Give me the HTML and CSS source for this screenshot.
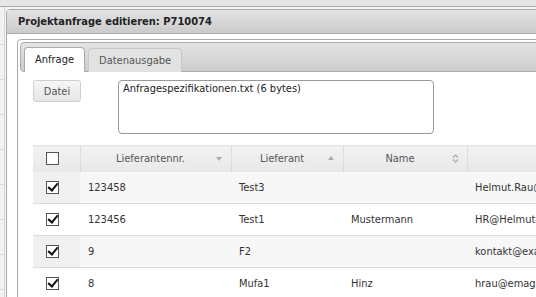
FILE: index.html
```html
<!DOCTYPE html>
<html lang="de">
<head>
    <meta charset="UTF-8">
    <title>Projektanfrage editieren</title>
    <link rel="stylesheet" href="styles.css">
</head>
<body>

<div class="topbar"></div>
<div class="backlist"></div>

<div class="dialog">
    <div class="dialog-title">Projektanfrage editieren: P710074</div>
    <div class="dialog-body">
        <div class="tabs">
            <ul class="tab-nav">
                <li class="tab active">Anfrage</li>
                <li class="tab">Datenausgabe</li>
            </ul>
            <div class="tab-panel">
                <div class="upload-row">
                    <button class="btn">Datei</button>
                    <div class="filebox">Anfragespezifikationen.txt (6 bytes)</div>
                </div>

                <table class="grid">
                    <thead>
                        <tr>
                            <th class="col-check"><span class="cb"></span></th>
                            <th class="col-nr">Lieferantennr.<span class="sort down"></span></th>
                            <th class="col-lief">Lieferant<span class="sort up"></span></th>
                            <th class="col-name">Name<span class="sort both">
                                <svg width="7" height="9" viewBox="0 0 7 9"><path d="M1 3.5 L3.5 1 L6 3.5 M1 5.5 L3.5 8 L6 5.5" fill="none" stroke="#aaa" stroke-width="1.2"/></svg>
                            </span></th>
                            <th class="col-mail"></th>
                        </tr>
                    </thead>
                    <tbody>
                        <tr class="odd">
                            <td class="col-check"><span class="cb checked"></span></td>
                            <td>123458</td>
                            <td>Test3</td>
                            <td></td>
                            <td>Helmut.Rau@example.de</td>
                        </tr>
                        <tr>
                            <td class="col-check"><span class="cb checked"></span></td>
                            <td>123456</td>
                            <td>Test1</td>
                            <td>Mustermann</td>
                            <td>HR@Helmut-Rau.de</td>
                        </tr>
                        <tr class="odd">
                            <td class="col-check"><span class="cb checked"></span></td>
                            <td>9</td>
                            <td>F2</td>
                            <td></td>
                            <td>kontakt@example.de</td>
                        </tr>
                        <tr>
                            <td class="col-check"><span class="cb checked"></span></td>
                            <td>8</td>
                            <td>Mufa1</td>
                            <td>Hinz</td>
                            <td>hrau@emag.de</td>
                        </tr>
                    </tbody>
                </table>
            </div>
        </div>
    </div>
</div>

</body>
</html>
```

FILE: styles.css
```css
body {
    margin: 0;
    width: 536px;
    height: 297px;
    overflow: hidden;
    position: relative;
    background: #f4f4f4;
    font-family: "DejaVu Sans Condensed", "DejaVu Sans", sans-serif;
    font-stretch: condensed;
    font-size: 11px;
    color: #333;
}
.topbar {
    height: 6px;
    background: #e6e6e6;
    border-bottom: 1px solid #aaa;
}
.backlist {
    width: 4px;
    height: 290px;
    border-right: 1px solid #d6d6d6;
    background: repeating-linear-gradient(180deg, #f2f2f2 0, #f2f2f2 34px, #d8d8d8 34px, #d8d8d8 35px);
    background-position: 0 3px;
}
.dialog {
    position: absolute;
    left: 6px;
    top: 9px;
    width: 600px;
    height: 320px;
    background: #fff;
    border: 1px solid #aaa;
    border-radius: 4px;
}
.dialog-title {
    height: 23px;
    line-height: 23px;
    padding-left: 11px;
    background: linear-gradient(#e3e3e3, #cbcbcb);
    border-bottom: 1px solid #aaa;
    border-radius: 3px 3px 0 0;
    font-weight: bold;
    color: #222;
}
.dialog-body {
    padding: 5px 0 0 10px;
}
.tabs {
    border: 1px solid #aaa;
    border-radius: 4px;
    padding: 2px;
    height: 300px;
}
.tab-nav {
    list-style: none;
    margin: 0;
    padding: 4px 0 0 3px;
    height: 24px;
    display: flex;
    gap: 3px;
    align-items: flex-end;
    background: linear-gradient(#e4e4e4, #cdcdcd);
    border: 1px solid #aaa;
    border-radius: 4px;
}
.tab {
    height: 23px;
    line-height: 23px;
    padding: 0 10px;
    border: 1px solid #c8c8c8;
    border-bottom: none;
    border-radius: 4px 4px 0 0;
    background: #e2e2e2;
    color: #555;
    margin-bottom: -1px;
}
.tab.active {
    background: #fff;
    border-color: #aaa;
    color: #222;
    height: 24px;
}
.tab-panel {
    padding: 8px 0 0 13px;
}
.upload-row {
    display: flex;
    align-items: flex-start;
    gap: 37px;
}
.btn {
    width: 48px;
    height: 22px;
    border: 1px solid #d0d0d0;
    border-radius: 3px;
    background: linear-gradient(#f6f6f6, #e6e6e6);
    font: inherit;
    color: #555;
    padding: 0;
}
.filebox {
    width: 306px;
    height: 50px;
    border: 1px solid #999;
    border-radius: 4px;
    padding: 1px 4px;
    color: #222;
}
.grid {
    margin-top: 11px;
    border-collapse: collapse;
    table-layout: fixed;
    width: 580px;
}
.grid th, .grid td {
    box-sizing: border-box;
}
.grid th {
    height: 26px;
    padding: 0 10px 0 0;
    font-weight: normal;
    color: #555;
    background: linear-gradient(#f2f2f2, #e8e8e8);
    border-left: 1px solid #dcdcdc;
    border-top: 1px solid #e2e2e2;
    position: relative;
}
.grid th:first-child {
    border-left: none;
}
.grid td {
    height: 32px;
    padding: 0 0 0 8px;
    border-bottom: 1px solid #dcdcdc;
    color: #333;
    white-space: nowrap;
    overflow: hidden;
}
.grid tr.odd td {
    background: #f7f7f7;
}
.grid tr.odd td.col-check {
    background: #f0f0f0;
}
.col-check { width: 47px; }
.col-nr { width: 151px; }
.col-lief { width: 112px; }
.col-name { width: 124px; }
.grid .col-check {
    padding: 0 0 0 13px;
    text-align: left;
}
.cb {
    display: block;
    width: 11px;
    height: 11px;
    border: 1px solid #555;
    background: #fff;
    position: relative;
}
.cb.checked::after {
    content: "";
    position: absolute;
    left: 3px;
    top: -1px;
    width: 4px;
    height: 8px;
    border: solid #111;
    border-width: 0 2px 2px 0;
    transform: rotate(40deg);
}
.sort {
    position: absolute;
    right: 9px;
    top: 9px;
}
.sort.down {
    border: 3px solid transparent;
    border-top: 4px solid #aaa;
    border-bottom: none;
    top: 11px;
}
.sort.up {
    border: 3px solid transparent;
    border-bottom: 4px solid #aaa;
    border-top: none;
    top: 10px;
}
.sort.both {
    top: 8px;
    right: 8px;
    line-height: 0;
}
```
